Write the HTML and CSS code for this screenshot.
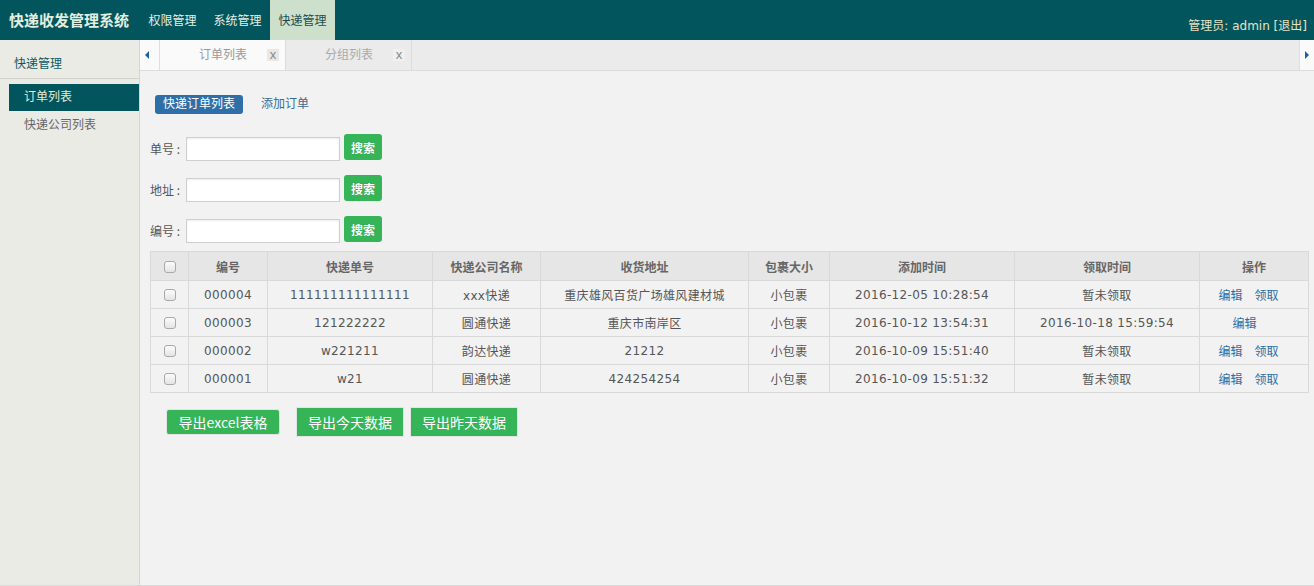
FILE: index.html
```html
<!DOCTYPE html>
<html lang="zh-CN">
<head>
<meta charset="utf-8">
<title>快递收发管理系统</title>
<link rel="stylesheet" href="styles.css">
</head>
<body>
<div class="app">
  <header class="topbar">
    <div class="brand">快递收发管理系统</div>
    <nav class="topnav">
      <a class="nav-item">权限管理</a>
      <a class="nav-item">系统管理</a>
      <a class="nav-item active">快递管理</a>
    </nav>
    <div class="user">管理员: admin [<a class="logout">退出</a>]</div>
  </header>
  <div class="body">
    <aside class="sidebar">
      <div class="side-title">快递管理</div>
      <ul class="side-menu">
        <li class="side-item active">订单列表</li>
        <li class="side-item">快递公司列表</li>
      </ul>
    </aside>
    <main class="main">
      <div class="tabbar">
        <div class="tab-arrow"><span class="tri tri-left"></span></div>
        <div class="tab active"><span class="tab-label">订单列表</span><span class="tab-close">x</span></div>
        <div class="tab"><span class="tab-label">分组列表</span><span class="tab-close">x</span></div>
        <div class="tab-spacer"></div>
        <div class="tab-arrow tab-arrow-right"><span class="tri tri-right"></span></div>
      </div>
      <div class="content">
        <div class="subtabs">
          <span class="pill">快递订单列表</span>
          <a class="sublink">添加订单</a>
        </div>
        <div class="search">
          <div class="search-row"><label class="search-label">单号 :</label><input class="search-input" type="text"><button class="btn-search">搜索</button></div>
          <div class="search-row"><label class="search-label">地址 :</label><input class="search-input" type="text"><button class="btn-search">搜索</button></div>
          <div class="search-row"><label class="search-label">编号 :</label><input class="search-input" type="text"><button class="btn-search">搜索</button></div>
        </div>
        <table class="grid">
          <colgroup>
            <col class="c-check"><col class="c-id"><col class="c-no"><col class="c-company"><col class="c-addr"><col class="c-size"><col class="c-time"><col class="c-time"><col class="c-ops">
          </colgroup>
          <thead>
            <tr><th><span class="chk"></span></th><th>编号</th><th>快递单号</th><th>快递公司名称</th><th>收货地址</th><th>包裹大小</th><th>添加时间</th><th>领取时间</th><th>操作</th></tr>
          </thead>
          <tbody>
            <tr><td><span class="chk"></span></td><td>000004</td><td>111111111111111</td><td>xxx快递</td><td>重庆雄风百货广场雄风建材城</td><td>小包裹</td><td>2016-12-05 10:28:54</td><td>暂未领取</td><td class="ops"><a class="op">编辑</a><a class="op">领取</a></td></tr>
            <tr><td><span class="chk"></span></td><td>000003</td><td>121222222</td><td>圆通快递</td><td>重庆市南岸区</td><td>小包裹</td><td>2016-10-12 13:54:31</td><td>2016-10-18 15:59:54</td><td class="ops"><a class="op">编辑</a></td></tr>
            <tr><td><span class="chk"></span></td><td>000002</td><td>w221211</td><td>韵达快递</td><td>21212</td><td>小包裹</td><td>2016-10-09 15:51:40</td><td>暂未领取</td><td class="ops"><a class="op">编辑</a><a class="op">领取</a></td></tr>
            <tr><td><span class="chk"></span></td><td>000001</td><td>w21</td><td>圆通快递</td><td>424254254</td><td>小包裹</td><td>2016-10-09 15:51:32</td><td>暂未领取</td><td class="ops"><a class="op">编辑</a><a class="op">领取</a></td></tr>
          </tbody>
        </table>
        <div class="exports">
          <button class="btn-export rounded">导出excel表格</button>
          <button class="btn-export">导出今天数据</button>
          <button class="btn-export">导出昨天数据</button>
        </div>
      </div>
    </main>
  </div>
</div>
</body>
</html>
```
FILE: styles.css
```css
* { box-sizing: border-box; }
html, body { margin: 0; padding: 0; }
body {
  font-family: "DejaVu Sans", "Noto Sans CJK SC", sans-serif;
  font-size: 12px;
  color: #555;
  background: #f2f2f2;
}
a { text-decoration: none; cursor: pointer; }

.app {
  height: 586px;
  display: flex;
  flex-direction: column;
  border-bottom: 1px solid #d9d9d9;
}

/* top bar */
.topbar {
  height: 40px;
  flex: none;
  background: #03555d;
  display: flex;
}
.brand {
  padding-left: 9px;
  font-family: "Noto Sans CJK SC", sans-serif;
  font-size: 15px;
  font-weight: bold;
  line-height: 40px;
  color: #e2eedf;
}
.topnav { display: flex; margin-left: 11px; }
.nav-item {
  padding: 0 8.5px;
  line-height: 40px;
  font-family: "Noto Sans CJK SC", sans-serif;
  color: #e6efe2;
}
.nav-item.active { background: #cde0cb; color: #1d4d4f; }
.user {
  margin-left: auto;
  padding: 18px 7px 0 0;
  font-size: 12px;
  line-height: 16px;
  color: #e6e3c6;
}
.logout { color: #e6e3c6; }

/* body */
.body { flex: 1; display: flex; min-height: 0; }
.sidebar {
  width: 140px;
  flex: none;
  background: #ebebe5;
  border-right: 1px solid #d6d6d1;
}
.side-title {
  height: 39px;
  padding: 15px 0 0 14px;
  line-height: 18px;
  color: #0b5a62;
  border-bottom: 1px solid #d3d3ce;
}
.side-menu { list-style: none; margin: 5px 0 0; padding: 0; }
.side-item {
  height: 27px;
  line-height: 28px;
  margin-left: 9px;
  padding-left: 15px;
  color: #666;
}
.side-item.active { background: #03555d; color: #e2eddb; line-height: 27px; }

.main { flex: 1; display: flex; flex-direction: column; min-width: 0; }

/* tab bar */
.tabbar {
  height: 31px;
  flex: none;
  display: flex;
  background: #ebebeb;
  border-bottom: 1px solid #dcdcdc;
}
.tab-arrow {
  width: 20px;
  background: #fafafa;
  border-right: 1px solid #dedede;
  display: flex;
  align-items: center;
  padding-left: 5px;
}
.tab-arrow-right {
  width: 15px;
  border-right: none;
  border-left: 1px solid #dedede;
  padding-left: 5px;
}
.tri { display: block; width: 0; height: 0; border-top: 4.5px solid transparent; border-bottom: 4.5px solid transparent; }
.tri-left { border-right: 4px solid #1c5fae; }
.tri-right { border-left: 4px solid #1c5fae; }
.tab {
  width: 126px;
  display: flex;
  align-items: center;
  padding-left: 39px;
  border-right: 1px solid #dcdcdc;
  color: #aaa;
}
.tab.active { background: #fafafa; color: #999; }
.tab-label { line-height: 16px; }
.tab-close {
  margin-left: auto;
  margin-right: 6px;
  width: 12px;
  height: 12px;
  line-height: 11px;
  text-align: center;
  font-family: "Liberation Sans", sans-serif;
  font-size: 13px;
  color: #888;
  background: #f0f0f0;
}
.tab.active .tab-close { background: #e8e8e8; }
.tab-spacer { flex: 1; }

/* content */
.content { padding: 24px 6px 0 10px; }
.subtabs { display: flex; align-items: center; margin-left: 5px; }
.pill {
  height: 19px;
  line-height: 19px;
  padding: 0 8px;
  background: #2f6fa7;
  color: #fff;
  border-radius: 3px;
}
.sublink { margin-left: 18px; color: #3a6a92; line-height: 19px; }

.search { margin-top: 20px; }
.search-row { display: flex; align-items: flex-start; height: 26px; margin-bottom: 15px; }
.search-label { width: 36px; margin-top: 3px; line-height: 24px; color: #555; font-family: "Noto Sans CJK SC", sans-serif; white-space: pre; }
.search-input {
  margin: 3px 0 0;
  width: 154px;
  height: 24px;
  border: 1px solid #cfcfcf;
  background: #fff;
  box-shadow: inset 0 1px 2px rgba(0,0,0,0.08);
  padding: 0 4px;
  font: inherit;
}
.btn-search {
  margin-left: 4px;
  width: 38px;
  height: 26px;
  border: none;
  border-radius: 3px;
  background: #35b558;
  color: #fff;
  font-family: "Noto Sans CJK SC", sans-serif;
  font-size: 12px;
  font-weight: bold;
  padding: 0;
  text-shadow: 0 0 1px rgba(0,0,0,0.25);
}

/* table */
.grid {
  margin-top: -6px;
  width: 1158px;
  border-collapse: collapse;
  table-layout: fixed;
  border: 1px solid #d6d6d6;
  letter-spacing: 0.35px;
}
.c-check { width: 38px; }
.c-id { width: 79px; }
.c-no { width: 165px; }
.c-company { width: 108px; }
.c-addr { width: 208px; }
.c-size { width: 81px; }
.c-time { width: 185px; }
.c-ops { width: 109px; }
.grid th, .grid td {
  border: 1px solid #d9d9d9;
  text-align: center;
  padding: 0;
  white-space: nowrap;
}
.grid th {
  height: 29px;
  background: #e6e6e6;
  font-weight: bold;
  color: #666;
  letter-spacing: 0;
}
.grid td { height: 28px; color: #555; }
.chk {
  display: inline-block;
  vertical-align: middle;
  width: 12px;
  height: 12px;
  border: 1px solid #a9a9a9;
  border-radius: 3px;
  background: linear-gradient(#fbfbfb, #e4e4e4);
}
.grid td.ops { letter-spacing: 0; padding-right: 11px; }
.op { color: #2a6ea6; margin-left: 12px; }
.op:first-child { margin-left: 0; }
.ops .op:only-child { margin-right: 8px; }

.exports { display: flex; align-items: center; margin-top: 14px; padding-left: 16px; }
.btn-export {
  height: 30px;
  width: 108px;
  padding: 0;
  margin-right: 6px;
  border: 1px solid #e4e4e4;
  background: #35b558;
  color: #fff;
  font-family: "Noto Sans CJK SC", sans-serif;
  font-size: 14px;
}
.btn-export.rounded { width: 114px; height: 26px; border-radius: 3px; margin-right: 16px; }
```
